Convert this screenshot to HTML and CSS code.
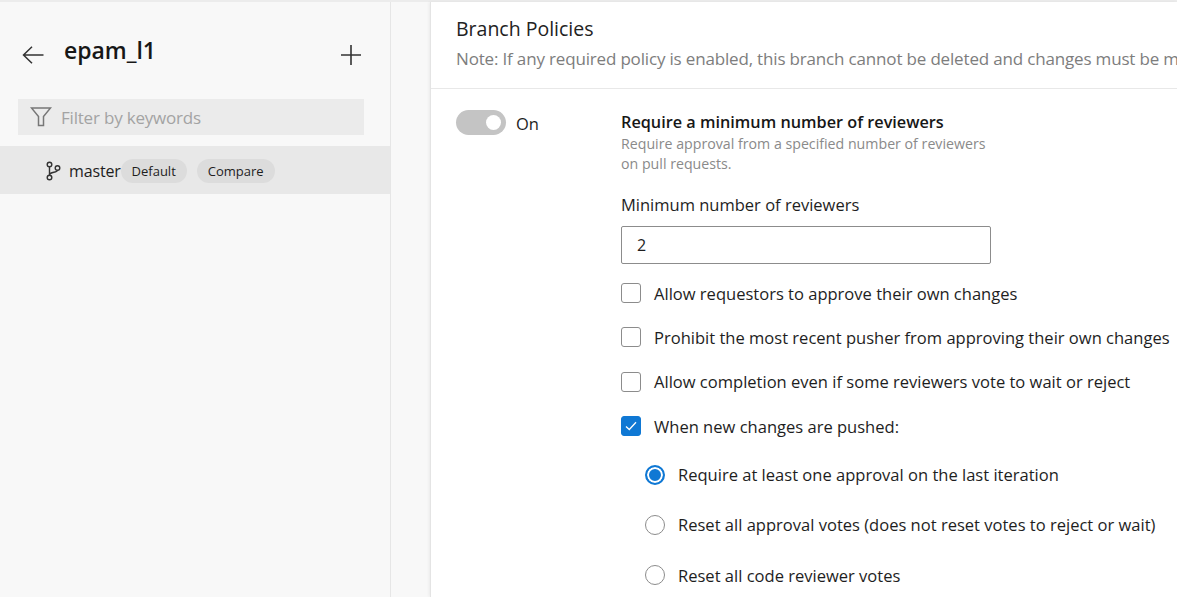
FILE: index.html
```html
<!DOCTYPE html>
<html lang="en">
<head>
<meta charset="UTF-8">
<title>Branch Policies</title>
<link rel="stylesheet" href="styles.css">
</head>
<body>

<div class="page">
    <div class="sidebar">
        <div class="repo-head">
            <svg class="back-icon" width="22" height="18" viewBox="0 0 22 18"><path d="M10 0.8 L1.5 9 L10 17.2 M1.5 9 H21.5" fill="none" stroke="#333" stroke-width="1.5"/></svg>
            <span class="repo-name">epam_l1</span>
            <svg class="add-icon" width="22" height="22" viewBox="0 0 22 22"><path d="M11 1 V21 M1 11 H21" fill="none" stroke="#333" stroke-width="1.6"/></svg>
        </div>
        <div class="filter">
            <svg width="22" height="20" viewBox="0 0 22 20"><path d="M1.5 1 H20.5 L13.5 9.5 V18.5 H8.5 V9.5 Z" fill="none" stroke="#777" stroke-width="1.5"/></svg>
            <span>Filter by keywords</span>
        </div>
        <div class="branch-row">
            <svg width="16" height="20" viewBox="0 0 16 20"><g fill="none" stroke="#333" stroke-width="1.4"><circle cx="4.5" cy="3.5" r="2.3"/><circle cx="4.5" cy="16.5" r="2.3"/><circle cx="12.5" cy="7" r="2.3"/><path d="M4.5 5.8 V14.2 M12.5 9.3 C12.5 12 4.5 10.500 4.500 14"/></g></svg>
            <span class="branch-name">master</span>
            <span class="pill pill-default">Default</span>
            <span class="pill pill-compare">Compare</span>
        </div>
    </div>

    <div class="panel">
        <div class="panel-head">
            <h2>Branch Policies</h2>
            <p>Note: If any required policy is enabled, this branch cannot be deleted and changes must be m</p>
        </div>
        <div class="policy">
            <div class="toggle-col">
                <span class="toggle"><span class="knob"></span></span>
                <span class="toggle-label">On</span>
            </div>
            <div class="options">
                <div class="policy-title">Require a minimum number of reviewers</div>
                <div class="policy-desc">Require approval from a specified number of reviewers<br>on pull requests.</div>
                <label class="field-label">Minimum number of reviewers</label>
                <div class="num-input">2</div>
                <div class="check-row"><span class="check"></span>Allow requestors to approve their own changes</div>
                <div class="check-row"><span class="check"></span>Prohibit the most recent pusher from approving their own changes</div>
                <div class="check-row"><span class="check"></span>Allow completion even if some reviewers vote to wait or reject</div>
                <div class="check-row"><span class="check checked"><svg width="12" height="10" viewBox="0 0 12 10"><path d="M1 5.500 L4.300 8.500 L11 1.200" fill="none" stroke="#fff" stroke-width="1.300"/></svg></span>When new changes are pushed:</div>
                <div class="radio-row"><span class="radio selected"></span>Require at least one approval on the last iteration</div>
                <div class="radio-row"><span class="radio"></span>Reset all approval votes (does not reset votes to reject or wait)</div>
                <div class="radio-row"><span class="radio"></span>Reset all code reviewer votes</div>
            </div>
        </div>
    </div>
</div>

</body>
</html>
```
FILE: styles.css
```css
html, body {
    margin: 0;
    padding: 0;
    height: 100%;
    overflow: hidden;
}

body {
    font-family: "Open Sans", "Noto Sans", sans-serif;
    font-size: 16px;
    color: #1e1e1e;
    background-color: #f8f8f8;
}

.page {
    display: flex;
    height: 597px;
    border-top: 2px solid #ececec;
    box-sizing: border-box;
}

.sidebar {
    width: 391px;
    flex-shrink: 0;
    box-sizing: border-box;
    border-right: 1px solid #e6e6e6;
}

.repo-head {
    display: flex;
    align-items: center;
    height: 40px;
    margin-top: 31px;
    padding: 0 28px 0 22px;
}

.back-icon {
    margin-top: 4px;
}

.repo-name {
    margin-left: 20px;
    margin-bottom: 6px;
    font-size: 23px;
    font-weight: 600;
    letter-spacing: -0.05px;
    color: #171717;
    flex: 1;
}

.add-icon {
    margin-top: 4px;
}

.filter {
    display: flex;
    align-items: center;
    height: 36px;
    margin: 26px 26px 0 18px;
    padding-left: 12px;
    background-color: #ebebeb;
    color: #a3a3a3;
    font-size: 17px;
    letter-spacing: -0.2px;
}

.filter svg {
    margin-right: 9px;
}

.branch-row {
    display: flex;
    align-items: center;
    height: 48px;
    margin-top: 11px;
    padding-left: 45px;
    padding-top: 2px;
    box-sizing: border-box;
    background-color: #e8e8e8;
}

.branch-name {
    margin-left: 8px;
    font-size: 16px;
    letter-spacing: -0.15px;
}

.pill {
    height: 24px;
    line-height: 24px;
    border-radius: 12px;
    background-color: #dcdcdc;
    font-size: 13px;
    text-align: center;
}

.pill-default {
    width: 66px;
}

.pill-compare {
    width: 78px;
    margin-left: 10px;
}

.panel {
    flex: 1;
    margin-left: 39px;
    min-width: 0;
    background-color: #fff;
    border-left: 1px solid #e4e4e4;
    box-shadow: -1px 0 3px rgba(0, 0, 0, 0.06);
}

.panel-head {
    height: 87px;
    box-sizing: border-box;
    padding: 13px 0 0 25px;
    border-bottom: 1px solid #e8e8e8;
    white-space: nowrap;
    overflow: hidden;
}

.panel-head h2 {
    margin: 0;
    font-size: 19.5px;
    font-weight: 400;
    line-height: 28px;
    color: #222;
}

.panel-head p {
    margin: 4px 0 0 0;
    font-size: 17px;
    line-height: 24px;
    letter-spacing: -0.17px;
    color: #7d7d7d;
}

.policy {
    display: flex;
    padding-left: 25px;
}

.toggle-col {
    display: flex;
    align-items: center;
    width: 165px;
    height: 26px;
    margin-top: 20px;
    flex-shrink: 0;
    font-size: 16.5px;
}

.toggle-label {
    margin-top: 2px;
}

.toggle {
    display: flex;
    justify-content: flex-end;
    align-items: center;
    width: 50px;
    height: 25px;
    margin-right: 10px;
    padding-right: 5px;
    box-sizing: border-box;
    border-radius: 13px;
    background-color: #c4c4c4;
}

.knob {
    width: 15px;
    height: 15px;
    border-radius: 50%;
    background-color: #fff;
}

.options {
    white-space: nowrap;
}

.policy-title {
    margin-top: 22px;
    font-size: 16.25px;
    font-weight: 600;
    line-height: 23px;
    color: #171717;
}

.policy-desc {
    font-size: 14.2px;
    line-height: 20px;
    color: #8a8a8a;
}

.field-label {
    display: block;
    margin-top: 19px;
    font-size: 16.5px;
    line-height: 24px;
}

.num-input {
    width: 370px;
    height: 38px;
    margin-top: 9px;
    padding-left: 15px;
    box-sizing: border-box;
    border: 1px solid #8c8c8c;
    border-radius: 2px;
    font-size: 16px;
    line-height: 36px;
}

.check-row {
    display: flex;
    align-items: center;
    height: 26px;
    margin-top: 18.4px;
    font-size: 16.55px;
}

.num-input + .check-row {
    margin-top: 16px;
}

.check {
    display: flex;
    justify-content: center;
    align-items: center;
    width: 20px;
    height: 20px;
    margin-right: 13px;
    box-sizing: border-box;
    border: 1px solid #8c8c8c;
    border-radius: 3px;
}

.check.checked {
    background-color: #0f78d4;
    border-color: #0f78d4;
}

.radio-row {
    display: flex;
    align-items: center;
    height: 26px;
    margin-top: 24.25px;
    margin-left: 24px;
    font-size: 16.55px;
}

.check-row + .radio-row {
    margin-top: 22.5px;
}

.radio {
    width: 20px;
    height: 20px;
    margin-right: 13px;
    box-sizing: border-box;
    border: 1px solid #8c8c8c;
    border-radius: 50%;
}

.radio.selected {
    border: 2px solid #0f78d4;
    background-color: #0f78d4;
    box-shadow: inset 0 0 0 2px #fff;
}
```
